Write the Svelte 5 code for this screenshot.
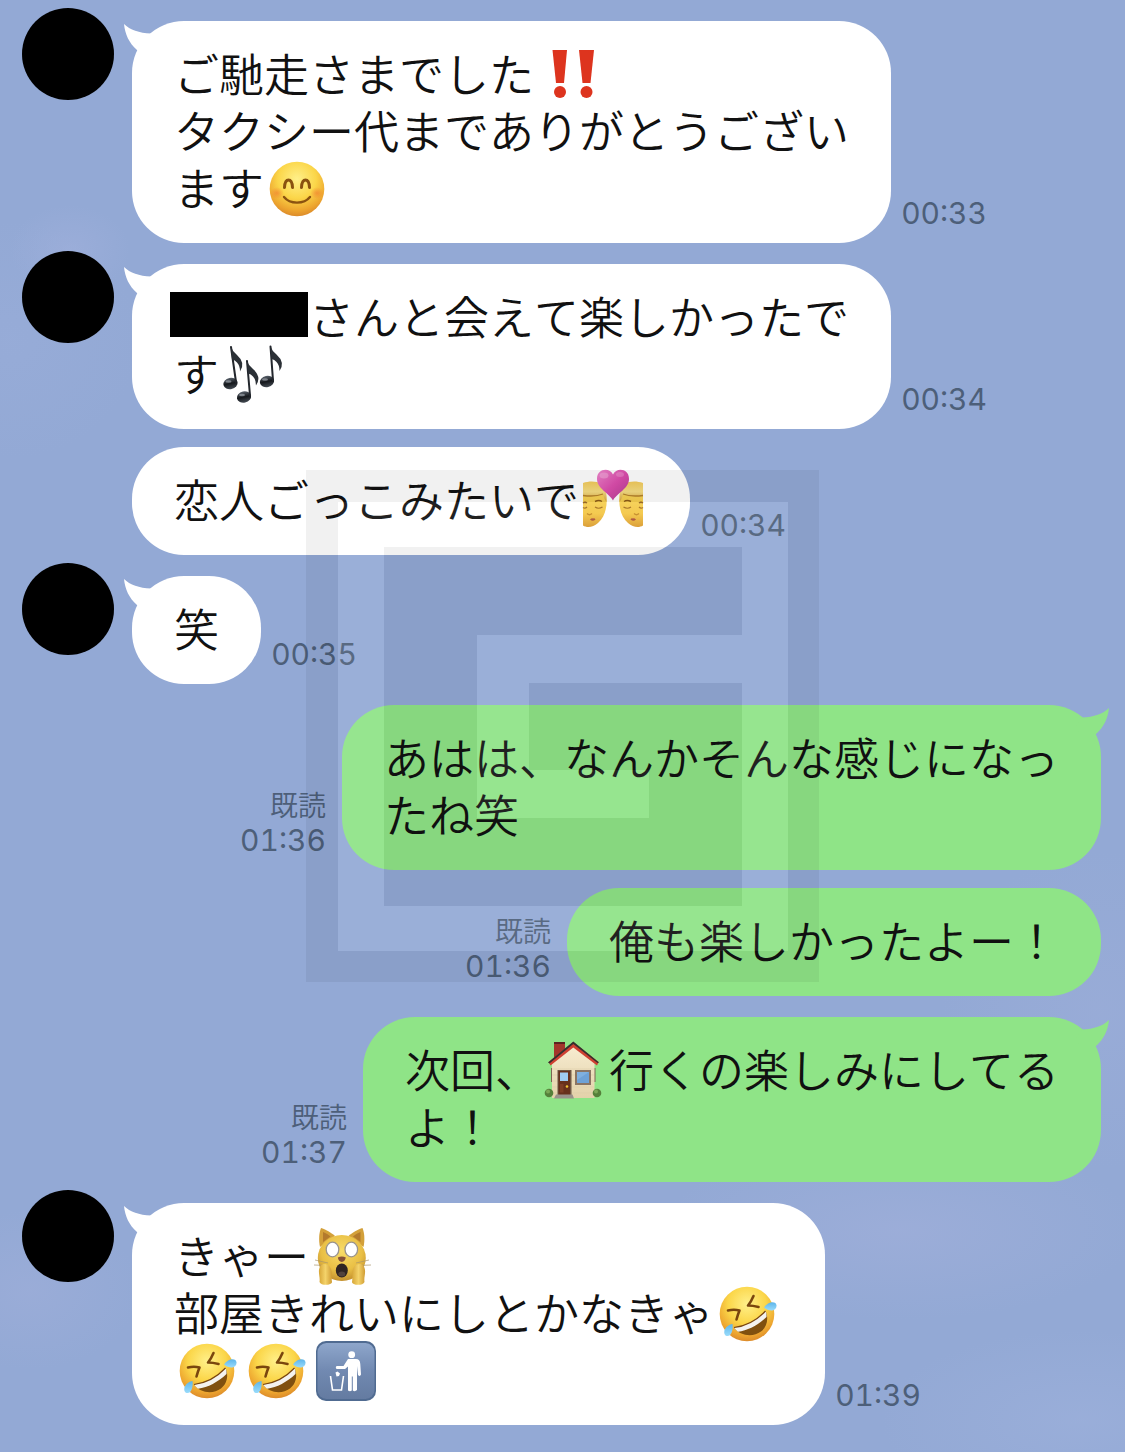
<script>
  const messages = [
    {
      from: 'them',
      tail: true,
      time: '00:33',
      lines: [
        [{ t: 'ご馳走さまでした' }, { e: 'bangbang' }],
        [{ t: 'タクシー代までありがとうござい' }],
        [{ t: 'ます' }, { e: 'smile' }]
      ]
    },
    {
      from: 'them',
      tail: true,
      time: '00:34',
      lines: [[{ hidden: true }, { t: 'さんと会えて楽しかったで' }], [{ t: 'す' }, { e: 'notes' }]]
    },
    {
      from: 'them',
      tail: false,
      time: '00:34',
      lines: [[{ t: '恋人ごっこみたいで' }, { e: 'kiss' }]]
    },
    { from: 'them', tail: true, time: '00:35', lines: [[{ t: '笑' }]] },
    {
      from: 'me',
      tail: true,
      time: '01:36',
      lines: [[{ t: 'あはは、なんかそんな感じになっ' }], [{ t: 'たね笑' }]]
    },
    { from: 'me', tail: false, time: '01:36', lines: [[{ t: '俺も楽しかったよー！' }]] },
    {
      from: 'me',
      tail: true,
      time: '01:37',
      lines: [[{ t: '次回、' }, { e: 'house' }, { t: '行くの楽しみにしてる' }], [{ t: 'よ！' }]]
    },
    {
      from: 'them',
      tail: true,
      time: '01:39',
      lines: [
        [{ t: 'きゃー' }, { e: 'cat' }],
        [{ t: '部屋きれいにしとかなきゃ' }, { e: 'rofl' }],
        [{ e: 'rofl' }, { e: 'rofl' }, { e: 'litter' }]
      ]
    }
  ];

  const labels = {
    bangbang: '‼️',
    smile: '😊',
    notes: '🎶',
    kiss: '👨‍❤️‍💋‍👨',
    house: '🏠',
    cat: '🙀',
    rofl: '🤣',
    litter: '🚮'
  };
</script>

{#snippet note(hx, hy, sx, sy, tx, ty)}
  <ellipse cx={hx} cy={hy} rx="7.2" ry="5.6" transform="rotate(-12 {hx} {hy})" fill="url(#noteHead)" />
  <path d="M{sx} {sy}L{tx} {ty}" stroke="#23272d" stroke-width="2" stroke-linecap="round" />
  <path d="M{tx} {ty}q1.5 4.5 6 8q9 8 3 16.500q0-6-3-9q-2-2.500-5-3z" fill="#2b3036" />
{/snippet}

{#snippet kisser()}
  <path d="M0 13C8 9.500 20 11 22.500 19C25.500 32 23 45 15 52C10 56.500 4 57 0 54.500Z" fill="url(#skin)" />
  <path d="M0 12C10 8.500 22 11 23 20L23.500 31C21.500 29 21 26 20 23C13 25 6 25 0 24Z" fill="url(#hair)" />
  <path d="M0 24.500C8 25.500 15 25 20 23" fill="none" stroke="#b5832d" stroke-width="1.3" />
  <path d="M12 30.500q4-2 7 0M0 32q2-1.500 4 0" fill="none" stroke="#8d5c18" stroke-width="1.4" />
  <path d="M12 36q3.500 2.500 7.500 0M0 36.500q2 1.500 4-.5" fill="none" stroke="#a36e1d" stroke-width="1.2" />
  <path d="M4 42.500q2.500 2.500 5 0" fill="none" stroke="#c48a22" stroke-width="1.3" />
  <path d="M7 48.500q2-2 3-1q1.500-1 2.500 1q-3 2.500-5.500 0z" fill="#a94e34" />
{/snippet}

{#snippet emoji(name)}
  <svg class="emoji" viewBox="0 0 60 60" role="img" aria-label={labels[name]}>
    {#if name === 'bangbang'}
      <g fill="#dd341e">
        <path d="M14.500 5H29L26 38H18Z" />
        <circle cx="22" cy="47" r="6" />
        <path d="M41 5H56L52.500 38H44.500Z" />
        <circle cx="48.5" cy="47" r="6" />
      </g>
    {:else if name === 'smile'}
      <circle cx="29" cy="30" r="27.3" fill="url(#face)" />
      <ellipse cx="9" cy="34" rx="7" ry="6" fill="url(#blush)" />
      <ellipse cx="49" cy="34" rx="7" ry="6" fill="url(#blush)" />
      <g fill="none" stroke="#8a5210" stroke-width="3" stroke-linecap="round">
        <path d="M16.500 28.500C17 18.500 24 18.500 24.500 28.500" />
        <path d="M33.500 28.500C34 18.500 41 18.500 41.500 28.500" />
        <path d="M16 38C22 45.500 36 45.500 42 38" stroke-width="2.4" />
      </g>
    {:else if name === 'notes'}
      {@render note(7.5, 38.5, 13, 37, 8, 2)}
      {@render note(21, 52, 27, 50.5, 24, 16)}
      {@render note(44, 36.5, 50, 35.5, 47.5, 1.5)}
      <g fill="#b9c0c8" opacity=".55">
        <ellipse cx="5.5" cy="36.5" rx="3" ry="1.3" />
        <ellipse cx="19" cy="50" rx="3" ry="1.3" />
        <ellipse cx="42" cy="34.5" rx="3" ry="1.3" />
      </g>
    {:else if name === 'kiss'}
      {@render kisser()}
      <g transform="matrix(-1 0 0 1 60 0)">{@render kisser()}</g>
      <path
        d="M30 29.500C27 23 14 17.500 14 8C14-3 27-3.500 30 3.500C33-3.500 46-3 46 8C46 17.500 33 23 30 29.500Z"
        fill="url(#heart)"
      />
      <ellipse cx="21" cy="4.5" rx="4.5" ry="3" fill="#f6b4e0" opacity=".5" />
      <ellipse cx="37" cy="3.5" rx="4" ry="2.5" fill="#f6b4e0" opacity=".35" />
    {:else if name === 'house'}
      <path d="M10 1.500H21V14L10 22Z" fill="#a3372b" />
      <path d="M10 1H21V3H10Z" fill="#5b2420" />
      <path d="M7 27H9V41H7ZM49.500 27H51.500V41H49.500Z" fill="#7c6652" />
      <path d="M8 22L29.500 5L50.500 22V57H8Z" fill="url(#wall)" />
      <path d="M8 28H50M8 34H50M8 40H50M8 46H50M8 52H50" stroke="#dccda9" stroke-width=".6" />
      <path d="M4.500 21L29.300 1L54.700 21L53 24.500L29.300 6.500L6.500 24.500Z" fill="#cf4032" />
      <path d="M4 21.500L29.300 .5L55 21.500L53.500 22L29.300 3L5.500 22.500Z" fill="#33302f" />
      <rect x="13.5" y="29" width="14" height="25" fill="#6f5744" />
      <rect x="14.5" y="30" width="11.5" height="24" fill="#67301c" />
      <rect x="16" y="31.5" width="8" height="8.5" fill="#9fcaf0" />
      <rect x="16" y="43" width="3.5" height="8.5" fill="#7d3d24" />
      <circle cx="23" cy="45.5" r="1.3" fill="#f2c232" />
      <rect x="31" y="29" width="16" height="15" fill="#8a7563" />
      <rect x="33" y="31" width="12" height="11" fill="#6ea2d6" />
      <path d="M33 31H45L33 39Z" fill="#7fb0de" />
      <circle cx="5" cy="52" r="4.3" fill="#55803a" />
      <circle cx="53" cy="52" r="4.3" fill="#55803a" />
      <circle cx="4" cy="50.5" r="2" fill="#7ba656" />
      <circle cx="52" cy="50.5" r="2" fill="#7ba656" />
      <path d="M12 53.500H28.500L30 57.500H10Z" fill="#99918a" />
    {:else if name === 'cat'}
      <path d="M8 1C12 2 19 6 22 9L7 20C5.500 13 6 6 8 1Z" fill="#d3a03a" />
      <path d="M49.500 1C45.500 2 38.500 6 35.500 9L50.500 20C52 13 51.500 6 49.500 1Z" fill="#d3a03a" />
      <path d="M10 5C13 6 15.500 8 17.500 9.500L10 15ZM47.500 5C44.500 6 42 8 40 9.500L47.500 15Z" fill="#b37a2d" />
      <ellipse cx="28.8" cy="31" rx="24" ry="23" fill="url(#catFace)" />
      <g fill="#fff" stroke="#9a948e" stroke-width="1.3">
        <ellipse cx="19.5" cy="22.5" rx="6.3" ry="7.3" />
        <ellipse cx="38.3" cy="22.5" rx="6.3" ry="7.3" />
      </g>
      <path d="M24.800 30.500Q28.800 28.500 32.800 30.500Q32 34.500 28.800 35Q25.500 34.500 24.800 30.500Z" fill="#875239" />
      <ellipse cx="28.8" cy="43.5" rx="6" ry="7" fill="#2f2422" />
      <ellipse cx="28.8" cy="47" rx="3.5" ry="2.5" fill="#51423d" />
      <path d="M2 33L15 36M1 38L14 38.500M56 33L43 36M58 38L44 38.500" stroke="#a8946c" stroke-width=".7" />
      <path
        d="M6.500 55C7.500 50 4 44 7.500 39C10 35.500 15 37 17 40C20 45 18 50 19 55C18.500 58.500 8 59 6.500 55Z"
        fill="url(#paw)"
      />
      <path
        d="M51.500 55C50.500 50 54 44 50.500 39C48 35.500 43 37 41 40C38 45 40 50 39 55C39.500 58.500 50 59 51.500 55Z"
        fill="url(#paw)"
      />
    {:else if name === 'rofl'}
      <circle cx="29" cy="30" r="27.3" fill="url(#face)" />
      <g fill="none" stroke="#7a460e" stroke-width="2.6" stroke-linecap="round" stroke-linejoin="round">
        <path d="M10 26.500Q16 25 21.500 26.500Q20 30 18.500 35.500" />
        <path d="M35.500 12Q33 18 30 21.500Q35 21.500 40.500 23" />
      </g>
      <path d="M16 43.500C28 42 39 36 47.500 27C51 34 49 43 43 47.500C35 53.500 22 52 16 43.500Z" fill="#80500f" />
      <path
        d="M16 43.500C28 42 39 36 47.500 27C48.500 29 48.700 31 48.500 33C40 41 30 46.500 20 47.800C18.500 46.500 17 45 16 43.500Z"
        fill="#f4f2ee"
      />
      <path d="M16 43.500C28 42 39 36 47.500 27" fill="none" stroke="#7a460e" stroke-width="1.2" />
      <path d="M46 23.500C50 17.500 58 16.500 58.500 21.500C58.500 27.500 51 28 46 23.500Z" fill="url(#tear)" />
      <path d="M14.500 40C8 41 4 47.500 7.500 51.500C12 54 15.500 48 14.500 40Z" fill="url(#tear)" />
    {:else if name === 'litter'}
      <rect width="60" height="60" rx="10" fill="#506b91" />
      <rect x="1.5" y="2" width="57" height="56" rx="9" fill="url(#sign)" />
      <g fill="#fff">
        <circle cx="35.7" cy="13.7" r="3.4" />
        <path
          d="M32 18H40Q44 18 44.300 23L45 33.500Q44 36 42 34L41 25V49Q39 51 36.800 49.500V35.500H35.800V49.500Q34 51 32 49.500V25.500L29 28H20.500Q19 26.500 20.500 25H27.500Z"
        />
        <path d="M19.500 31.500L21.500 30.500L24 32.500L23 35L20.500 35.500Z" />
      </g>
      <path d="M14.500 35L16.500 49H25.500L27.500 35" fill="none" stroke="#fff" stroke-width="1.6" />
    {/if}
  </svg>
{/snippet}

<main class="chat">
  <svg class="paints" width="0" height="0" aria-hidden="true">
    <defs>
      <radialGradient id="face" cx=".5" cy=".32" r=".7">
        <stop offset="0" stop-color="#fff08a" />
        <stop offset=".5" stop-color="#fbd649" />
        <stop offset=".82" stop-color="#eda52f" />
        <stop offset="1" stop-color="#d9862a" />
      </radialGradient>
      <radialGradient id="blush">
        <stop offset="0" stop-color="#f0702c" stop-opacity=".55" />
        <stop offset="1" stop-color="#f0702c" stop-opacity="0" />
      </radialGradient>
      <linearGradient id="noteHead" x2="0" y2="1">
        <stop offset="0" stop-color="#59616b" />
        <stop offset=".5" stop-color="#15181c" />
        <stop offset="1" stop-color="#444b53" />
      </linearGradient>
      <linearGradient id="skin" x2="0" y2="1">
        <stop offset="0" stop-color="#f9db63" />
        <stop offset=".7" stop-color="#f4c643" />
        <stop offset="1" stop-color="#d9992c" />
      </linearGradient>
      <linearGradient id="hair" x2="0" y2="1">
        <stop offset="0" stop-color="#f3cb5b" />
        <stop offset=".5" stop-color="#f6dd83" />
        <stop offset="1" stop-color="#d7a23b" />
      </linearGradient>
      <linearGradient id="heart" x2="1" y2="1">
        <stop offset="0" stop-color="#ef87cd" />
        <stop offset=".5" stop-color="#dd4fae" />
        <stop offset="1" stop-color="#b23a92" />
      </linearGradient>
      <linearGradient id="wall" x2="0" y2="1">
        <stop offset="0" stop-color="#f7ecd0" />
        <stop offset="1" stop-color="#e3d2aa" />
      </linearGradient>
      <radialGradient id="catFace" cx=".5" cy=".35" r=".65">
        <stop offset="0" stop-color="#f8dc68" />
        <stop offset=".65" stop-color="#e9bf45" />
        <stop offset="1" stop-color="#c4912f" />
      </radialGradient>
      <linearGradient id="paw">
        <stop offset="0" stop-color="#d7a637" />
        <stop offset=".5" stop-color="#f4d36a" />
        <stop offset="1" stop-color="#d09c33" />
      </linearGradient>
      <linearGradient id="tear" x2="0" y2="1">
        <stop offset="0" stop-color="#5db5ea" />
        <stop offset="1" stop-color="#9adcfb" />
      </linearGradient>
      <linearGradient id="sign" x2="0" y2="1">
        <stop offset="0" stop-color="#8ea6cb" />
        <stop offset=".5" stop-color="#7189b1" />
        <stop offset="1" stop-color="#647ba1" />
      </linearGradient>
    </defs>
  </svg>

  <ol class="log">
    {#each messages as m}
      <li class="row {m.from}" class:first={m.tail}>
        {#if m.from === 'them'}
          <div class="side">
            {#if m.tail}<div class="avatar"></div>{/if}
          </div>
        {/if}
        <div class="bubble">
          {#if m.tail}
            <svg class="tail" viewBox="0 0 34 34" aria-hidden="true">
              <path d="M0 0C6 6 15 9 27 9.500L34 20L20 34L13 26C5 19 1 10 0 0Z" />
            </svg>
          {/if}
          {#each m.lines as line}
            <p class="line">
              {#each line as part}
                {#if part.e}
                  {@render emoji(part.e)}
                {:else if part.hidden}
                  <span class="redacted"></span>
                {:else}
                  <span class="text">{part.t}</span>
                {/if}
              {/each}
            </p>
          {/each}
        </div>
        <div class="meta">
          {#if m.from === 'me'}<span class="read">既読</span>{/if}
          <time>{m.time}</time>
        </div>
      </li>
    {/each}
  </ol>

  <div class="watermark" aria-hidden="true">
    <svg viewBox="0 0 513 512">
      <path
        fill="#fff"
        fill-opacity=".07"
        fill-rule="evenodd"
        d="M32 32H482V481H32ZM78 77V436H436V213H223V300H343V348H171V165H436V77Z"
      />
      <path
        fill="#000"
        fill-opacity=".055"
        fill-rule="evenodd"
        d="M0 0H513V512H0ZM32 32V481H482V32ZM78 77H436V165H171V348H343V300H223V213H436V436H78Z"
      />
    </svg>
  </div>
</main>

<style>
  :global(body) {
    margin: 0;
    background: #93a9d5;
  }

  .chat {
    position: relative;
    box-sizing: border-box;
    min-height: 100vh;
    padding: 8px 24px 27px 22px;
    overflow: hidden;
    color: #111;
    font-family: 'Noto Sans CJK JP', sans-serif;
    background:
      radial-gradient(ellipse 60px 45px at 70px 250px, #a0b0dc99, #a0b0dc00),
      radial-gradient(ellipse 130px 120px at 10px 340px, #9cafdb66, #9cafdb00),
      radial-gradient(ellipse 240px 90px at 900px 1230px, #a0afdaaa, #a0afda00),
      radial-gradient(ellipse 160px 160px at 1100px 1010px, #a0afda66, #a0afda00),
      radial-gradient(ellipse 200px 90px at 1080px 1420px, #9fb2dd88, #9fb2dd00),
      radial-gradient(ellipse 110px 80px at 30px 1290px, #a0afda88, #a0afda00),
      #93a9d5;
  }

  .paints {
    position: absolute;
  }

  .log {
    margin: 0;
    padding: 0;
    list-style: none;
  }

  .row {
    display: flex;
    margin-top: 18px;
  }

  .them.first {
    margin-top: 8px;
  }

  .them.first:first-child {
    margin-top: 0;
  }

  .them.first .bubble {
    margin-top: 13px;
  }

  .me {
    flex-direction: row-reverse;
  }

  .me.first {
    margin-top: 21px;
  }

  .side {
    flex: none;
    width: 92px;
    margin-right: 18px;
  }

  .avatar {
    height: 92px;
    border-radius: 50%;
    background: #000;
  }

  .bubble {
    position: relative;
    padding: 25px 42px 26px;
    border-radius: 52px;
    background: #fff;
  }

  .me .bubble {
    background: #8fe487;
  }

  .tail {
    position: absolute;
    top: 3px;
    left: -8px;
    width: 34px;
    height: 34px;
    fill: #fff;
  }

  .me .tail {
    right: -8px;
    left: auto;
    fill: #8fe487;
    transform: scaleX(-1);
  }

  .line {
    display: flex;
    align-items: center;
    height: 57px;
    margin: 0;
    font-size: 45px;
    font-weight: 350;
    font-kerning: none;
    line-height: 57px;
    white-space: nowrap;
  }

  .text {
    padding-bottom: 5px;
  }

  .emoji {
    flex: none;
    width: 60px;
    height: 60px;
    margin: 0 5px 0 4px;
    overflow: visible;
  }

  .redacted {
    width: 138px;
    height: 45px;
    margin: 0 1px 6px -4px;
    background: #000;
  }

  .meta {
    display: flex;
    flex-direction: column;
    align-items: flex-end;
    justify-content: flex-end;
    box-sizing: border-box;
    min-width: 96px;
    padding-bottom: 12px;
    color: #4d5f79;
    font-size: 30px;
    line-height: 36px;
  }

  .me .meta {
    padding-right: 16px;
  }

  .read {
    font-size: 28px;
    font-weight: 350;
  }

  time {
    font-family: Inter, sans-serif;
    font-feature-settings: 'tnum', 'case';
  }

  .watermark {
    position: absolute;
    inset: 0;
    display: grid;
    place-items: center;
    pointer-events: none;
  }

  .watermark svg {
    width: 513px;
    height: 512px;
  }
</style>
